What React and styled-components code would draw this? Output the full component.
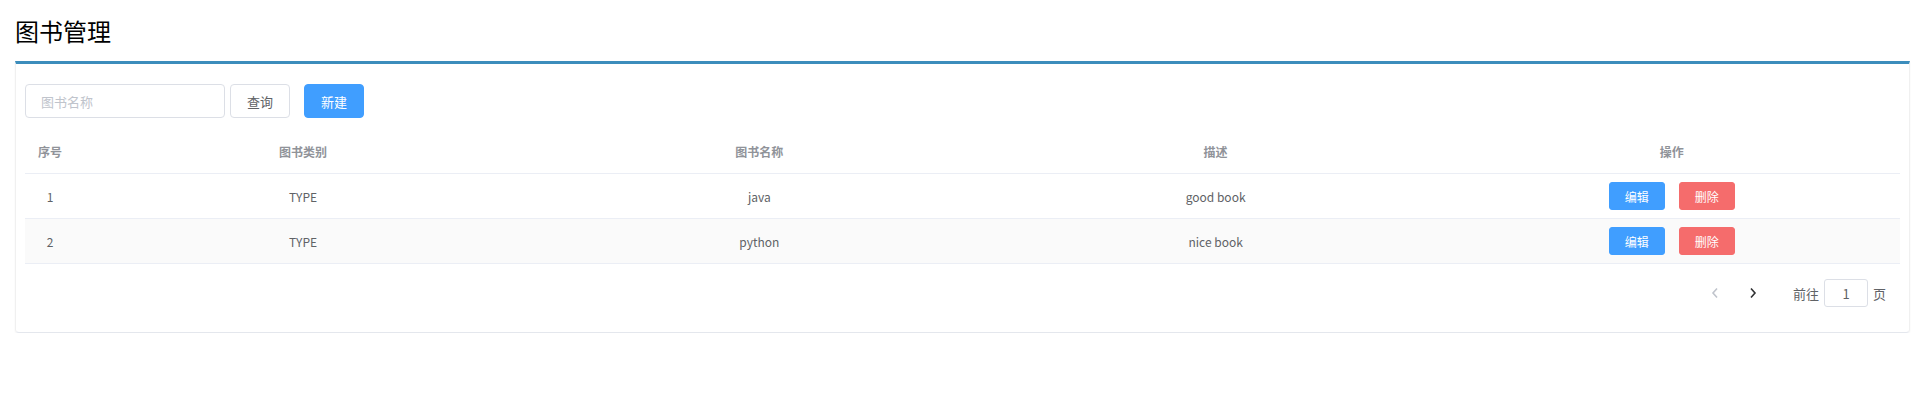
import React from 'react';
import styled, { createGlobalStyle } from 'styled-components';

const GlobalStyle = createGlobalStyle`
    html, body {
        margin: 0;
        padding: 0;
        background: #fff;
    }
    body {
        font-family: "Noto Sans CJK SC", "Noto Sans", sans-serif;
        color: #606266;
    }
    * {
        box-sizing: border-box;
    }
`;

const Page = styled.div`
    padding: 0 10px 0 15px;
`;

const Title = styled.h1`
    margin: 0;
    padding-top: 14px;
    height: 61px;
    font-size: 24px;
    font-weight: 400;
    color: #000;
    line-height: 34px;
`;

const Card = styled.div`
    border-top: 3px solid #3c8dbc;
    border-left: 1px solid #f0f0f0;
    border-right: 1px solid #f0f0f0;
    border-bottom: 1px solid #e4e7ed;
    border-radius: 0 0 4px 4px;
    box-shadow: 0 1px 2px rgba(0, 0, 0, 0.05);
    padding: 20px 9px 25px 9px;
`;

const Toolbar = styled.div`
    display: flex;
    align-items: center;
    height: 34px;
    margin-bottom: 11px;
`;

const SearchInput = styled.input`
    width: 200px;
    height: 34px;
    border: 1px solid #dcdfe6;
    border-radius: 4px;
    padding: 0 15px;
    font-family: inherit;
    font-size: 13px;
    color: #606266;
    outline: none;
    &::placeholder {
        color: #c0c4cc;
    }
`;

const Button = styled.button`
    height: ${p => p.$small ? '28px' : '34px'};
    width: ${p => p.$small ? '56px' : '60px'};
    margin-left: ${p => p.$gap || 0}px;
    border-radius: ${p => p.$small ? '3px' : '4px'};
    border: 1px solid ${p => p.$color || '#dcdfe6'};
    background: ${p => p.$color || '#fff'};
    color: ${p => p.$color ? '#fff' : '#606266'};
    font-family: inherit;
    font-size: ${p => p.$small ? '12px' : '13px'};
    padding: 0;
    cursor: pointer;
`;

const Table = styled.div`
    font-size: 12px;
`;

const Row = styled.div`
    display: grid;
    grid-template-columns: 50px repeat(4, 1fr);
    align-items: center;
    height: 45px;
    border-bottom: 1px solid #ebeef5;
    background: ${p => p.$striped ? '#fafafa' : '#fff'};
`;

const HeadCell = styled.div`
    text-align: center;
    color: #909399;
    font-weight: 700;
`;

const Cell = styled.div`
    text-align: center;
    color: #606266;
    display: flex;
    justify-content: center;
    align-items: center;
`;

const Pager = styled.div`
    display: flex;
    justify-content: flex-end;
    align-items: center;
    margin-top: 15px;
    height: 28px;
    padding-right: 14px;
    font-size: 13px;
    color: #606266;
`;

const PagerBtn = styled.button`
    width: 35px;
    height: 28px;
    margin-left: ${p => p.$gap || 0}px;
    border: none;
    background: transparent;
    padding: 0;
    display: flex;
    align-items: center;
    justify-content: center;
    color: ${p => p.disabled ? '#c0c4cc' : '#303133'};
`;

const Jumper = styled.span`
    display: flex;
    align-items: center;
    margin-left: 22px;
    gap: 5px;
`;

const PageInput = styled.input`
    width: 44px;
    height: 28px;
    border: 1px solid #dcdfe6;
    border-radius: 3px;
    text-align: center;
    font-family: inherit;
    font-size: 13px;
    color: #606266;
    outline: none;
`;

const Chevron = ({dir}) => (
    <svg width="8" height="12" viewBox="0 0 8 12">
        <path
            d={dir === 'left' ? 'M6 1.5 L2 6 L6 10.5' : 'M2 1.5 L6 6 L2 10.5'}
            fill="none"
            stroke="currentColor"
            strokeWidth="1.6"
        />
    </svg>
);

const books = [
    {id: 1, type: 'TYPE', name: 'java', desc: 'good book'},
    {id: 2, type: 'TYPE', name: 'python', desc: 'nice book'},
];

const App = () => {
    return (
        <Page>
            <GlobalStyle />
            <Title>图书管理</Title>
            <Card>
                <Toolbar>
                    <SearchInput type="text" placeholder="图书名称" />
                    <Button $gap={5}>查询</Button>
                    <Button $gap={14} $color="#409eff">新建</Button>
                </Toolbar>
                <Table>
                    <Row>
                        <HeadCell>序号</HeadCell>
                        <HeadCell>图书类别</HeadCell>
                        <HeadCell>图书名称</HeadCell>
                        <HeadCell>描述</HeadCell>
                        <HeadCell>操作</HeadCell>
                    </Row>
                    {books.map((book, i) => (
                        <Row key={book.id} $striped={i % 2 === 1}>
                            <Cell>{book.id}</Cell>
                            <Cell>{book.type}</Cell>
                            <Cell>{book.name}</Cell>
                            <Cell>{book.desc}</Cell>
                            <Cell>
                                <Button $small $color="#409eff">编辑</Button>
                                <Button $small $gap={14} $color="#f56c6c">删除</Button>
                            </Cell>
                        </Row>
                    ))}
                </Table>
                <Pager>
                    <PagerBtn disabled><Chevron dir="left" /></PagerBtn>
                    <PagerBtn $gap={3}><Chevron dir="right" /></PagerBtn>
                    <Jumper>
                        前往
                        <PageInput defaultValue="1" />
                        页
                    </Jumper>
                </Pager>
            </Card>
        </Page>
    );
};

export default App;
